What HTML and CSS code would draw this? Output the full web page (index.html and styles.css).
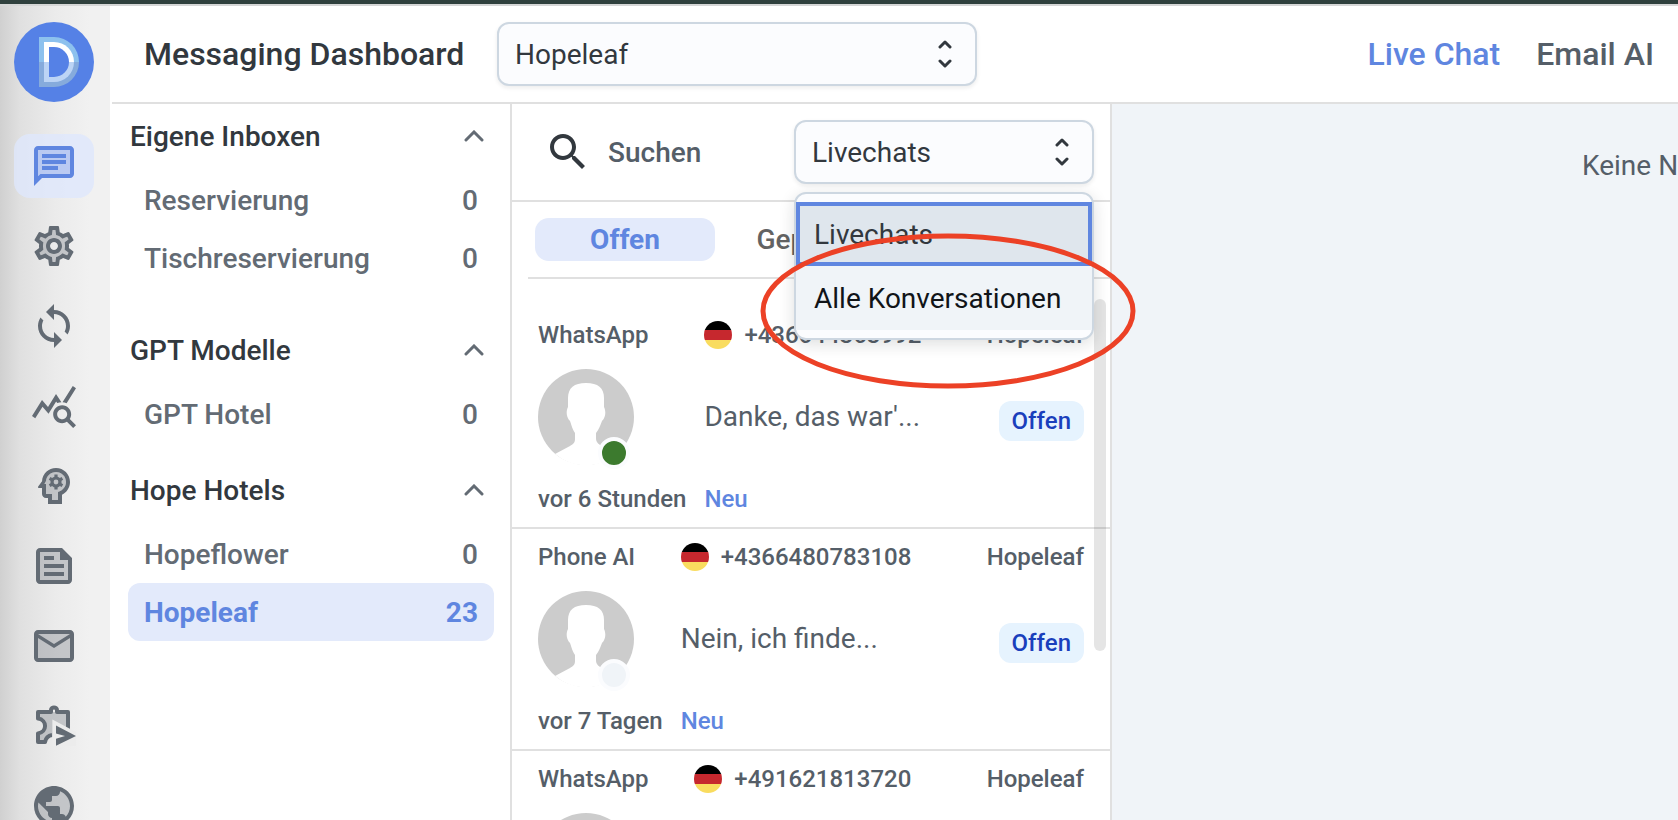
FILE: index.html
```html
<!DOCTYPE html>
<html lang="de">
<head>
    <meta charset="UTF-8">
    <meta name="viewport" content="width=device-width, initial-scale=1.0">
    <title>Messaging Dashboard</title>
    <link rel="stylesheet" href="styles.css">
</head>
<body>
    <!-- shared shapes -->
    <svg class="defs" aria-hidden="true">
        <symbol id="avatar" viewBox="0 0 96 96">
            <circle cx="48" cy="48" r="48" fill="#cccccc"/>
            <path fill="#fff" d="M48 14C36 14 30 19 30 29v9c-2 4-2 10 2 14 2 6 3 9 5 12v6c0 4-2 5-5 7l-15 8a48 48 0 0 0 62 0l-15-8c-4-2-6-4-6-8v-5c3-4 4-7 6-12 4-4 4-10 2-14v-9c0-10-6-15-18-15z"/>
        </symbol>
        <symbol id="updown" viewBox="0 0 14 28">
            <path d="M2 7l5-5 5 5M2 21l5 5 5-5" fill="none" stroke="currentColor" stroke-width="3" stroke-linecap="round" stroke-linejoin="round"/>
        </symbol>
        <symbol id="chevron" viewBox="0 0 20 12">
            <path d="M2 10l8-8 8 8" fill="none" stroke="currentColor" stroke-width="3" stroke-linecap="round"/>
        </symbol>
    </svg>

    <div class="app">
        <aside class="sidebar">
            <a class="logo" href="#" aria-label="Start"><span class="logo-mark"></span></a>
            <nav class="side-nav">
                <a class="side-link active" href="#" aria-label="Chat">
                    <svg viewBox="0 0 24 24"><path opacity=".3" d="M4 17.17L5.17 16H20V4H4z"/><path d="M20 2H4c-1.1 0-1.99.9-1.99 2L2 22l4-4h14c1.1 0 2-.9 2-2V4c0-1.1-.9-2-2-2zm0 14H5.17L4 17.17V4h16v12zM6 12h8v2H6zm0-3h12v2H6zm0-3h12v2H6z"/></svg>
                </a>
                <a class="side-link" href="#" aria-label="Einstellungen">
                    <svg viewBox="0 0 24 24"><path opacity=".3" fill-rule="evenodd" d="M17.45 11.27c.04.31.05.52.05.73 0 .21-.02.43-.05.73l-.14 1.13.89.7 1.08.84-.7 1.21-1.27-.51-1.04-.42-.9.68c-.43.32-.84.56-1.25.73l-1.06.43-.16 1.13-.2 1.35h-1.4l-.19-1.35-.16-1.13-1.06-.43c-.43-.18-.83-.41-1.23-.71l-.91-.7-1.06.43-1.27.51-.7-1.21 1.08-.84.89-.7-.14-1.13c-.03-.31-.05-.54-.05-.74s.02-.43.05-.73l.14-1.13-.89-.7-1.08-.84.7-1.21 1.27.51 1.04.42.9-.68c.43-.32.84-.56 1.25-.73l1.06-.43.16-1.13.2-1.35h1.39l.19 1.35.16 1.13 1.06.43c.43.18.83.41 1.23.71l.91.7 1.06-.43 1.27-.51.7 1.21-1.07.85-.89.7zM12 10a2 2 0 1 0 0 4 2 2 0 0 0 0-4z"/><path d="M19.43 12.98c.04-.32.07-.64.07-.98 0-.34-.03-.66-.07-.98l2.11-1.65c.19-.15.24-.42.12-.64l-2-3.46c-.09-.16-.26-.25-.44-.25-.06 0-.12.01-.17.03l-2.49 1c-.52-.4-1.08-.73-1.69-.98l-.38-2.65C14.46 2.18 14.25 2 14 2h-4c-.25 0-.46.18-.49.42l-.38 2.65c-.61.25-1.17.59-1.69.98l-2.49-1c-.06-.02-.12-.03-.18-.03-.17 0-.34.09-.43.25l-2 3.46c-.13.22-.07.49.12.64l2.11 1.65c-.04.32-.07.65-.07.98 0 .33.03.66.07.98l-2.11 1.65c-.19.15-.24.42-.12.64l2 3.46c.09.16.26.25.44.25.06 0 .12-.01.17-.03l2.49-1c.52.4 1.08.73 1.69.98l.38 2.65c.03.24.24.42.49.42h4c.25 0 .46-.18.49-.42l.38-2.65c.61-.25 1.17-.59 1.69-.98l2.49 1c.06.02.12.03.18.03.17 0 .34-.09.43-.25l2-3.46c.12-.22.07-.49-.12-.64l-2.11-1.65zm-1.98-1.71c.04.31.05.52.05.73 0 .21-.02.43-.05.73l-.14 1.13.89.7 1.08.84-.7 1.21-1.27-.51-1.04-.42-.9.68c-.43.32-.84.56-1.25.73l-1.06.43-.16 1.13-.2 1.35h-1.4l-.19-1.35-.16-1.13-1.06-.43c-.43-.18-.83-.41-1.23-.71l-.91-.7-1.06.43-1.27.51-.7-1.21 1.08-.84.89-.7-.14-1.13c-.03-.31-.05-.54-.05-.74s.02-.43.05-.73l.14-1.13-.89-.7-1.08-.84.7-1.21 1.27.51 1.04.42.9-.68c.43-.32.84-.56 1.25-.73l1.06-.43.16-1.13.2-1.35h1.39l.19 1.35.16 1.13 1.06.43c.43.18.83.41 1.23.71l.91.7 1.06-.43 1.27-.51.7 1.21-1.07.85-.89.7.14 1.13zM12 8c-2.21 0-4 1.79-4 4s1.79 4 4 4 4-1.79 4-4-1.79-4-4-4zm0 6c-1.1 0-2-.9-2-2s.9-2 2-2 2 .9 2 2-.9 2-2 2z"/></svg>
                </a>
                <a class="side-link" href="#" aria-label="Synchronisieren">
                    <svg viewBox="0 0 24 24"><path d="M12 4V1L8 5l4 4V6c3.31 0 6 2.69 6 6 0 1.01-.25 1.97-.7 2.8l1.46 1.46C19.54 15.03 20 13.57 20 12c0-4.42-3.58-8-8-8zm0 14c-3.31 0-6-2.69-6-6 0-1.01.25-1.97.7-2.8L5.24 7.74C4.46 8.97 4 10.43 4 12c0 4.42 3.58 8 8 8v3l4-4-4-4v3z"/></svg>
                </a>
                <a class="side-link" href="#" aria-label="Statistik">
                    <svg viewBox="0 0 24 24"><path d="M19.88 18.47c.44-.7.7-1.51.7-2.39 0-2.49-2.01-4.5-4.5-4.5s-4.5 2.01-4.5 4.5 2.01 4.5 4.49 4.5c.88 0 1.7-.26 2.39-.7L21.58 23 23 21.58l-3.12-3.11zm-3.8.11c-1.38 0-2.5-1.12-2.5-2.5s1.12-2.5 2.5-2.5 2.5 1.12 2.5 2.5-1.12 2.5-2.5 2.5zm-.36-8.5c-.74.02-1.45.18-2.1.45l-.55-.83-3.8 6.18-3.01-3.52-3.63 5.81L1 17l5-8 3 3.5L13 6l2.72 4.08zm2.59.5c-.64-.28-1.33-.45-2.05-.49L21.38 2 23 3.18l-4.69 7.4z"/></svg>
                </a>
                <a class="side-link" href="#" aria-label="KI">
                    <svg viewBox="0 0 24 24"><path opacity=".3" d="M14 15v4h-3v-3H8v-5H7.2L8 9.5C8.2 7 10.3 5 13 5c2.8 0 5 2.2 5 5 0 2.3-1.5 4.2-4 5z"/><path fill-rule="evenodd" d="M13 3C9.25 3 6.2 5.94 6.02 9.64L4.1 12.2c-.25.33-.01.8.4.8H6v3c0 1.1.9 2 2 2h1v3h7v-4.68c2.36-1.12 4-3.53 4-6.32 0-3.87-3.13-7-7-7zm1 12v4h-3v-3H8v-5H7.2L8 9.5C8.2 7 10.3 5 13 5c2.8 0 5 2.2 5 5 0 2.3-1.5 4.2-4 5z"/><circle cx="13" cy="10" r="2" fill="none" stroke="currentColor" stroke-width="1.6"/><path fill="none" stroke="currentColor" stroke-width="1.6" d="M13 6.3v1.5M13 12.2v1.5M9.8 8.15l1.3.75M14.9 11.1l1.3.75M9.8 11.85l1.3-.75M14.9 8.9l1.3-.75"/></svg>
                </a>
                <a class="side-link" href="#" aria-label="Artikel">
                    <svg viewBox="0 0 24 24"><path opacity=".3" d="M5 5h10v4h4v10H5z"/><path d="M16 3H5c-1.1 0-2 .9-2 2v14c0 1.1.9 2 2 2h14c1.1 0 2-.9 2-2V8l-5-5zm3 16H5V5h10v4h4v10zM7 17h10v-2H7v2zm5-10H7v2h5V7zm-5 6h10v-2H7v2z"/></svg>
                </a>
                <a class="side-link" href="#" aria-label="E-Mail">
                    <svg viewBox="0 0 24 24"><path opacity=".3" d="M4 6h16v12H4z"/><path d="M22 6c0-1.1-.9-2-2-2H4c-1.1 0-2 .9-2 2v12c0 1.1.9 2 2 2h16c1.1 0 2-.9 2-2V6zm-2 0l-8 4.99L4 6h16zm0 12H4V8l8 5 8-5v10z"/></svg>
                </a>
                <a class="side-link" href="#" aria-label="Integrationen">
                    <svg viewBox="0 0 24 24"><path opacity=".3" d="M4 5h15v8l-8 4-4 3H4v-4.5a3.5 3.5 0 0 0 0-7z"/><path fill="none" stroke="currentColor" stroke-width="2" stroke-linejoin="round" d="M19 14V5h-5.5V4c0-1.7-3-1.7-3 0v1H4v3.3c4.7.6 4.7 6.8 0 7.4V20h3.5c.4-2 1.7-3.2 3.5-3.5"/><path fill="#ececec" d="M11.2 8.8L23 15v7H11.2z"/><path d="M13 11.8l10 5.2-10 4.9v-3.5l4.5-1.4-4.5-1.3z"/></svg>
                </a>
                <a class="side-link" href="#" aria-label="Webseite">
                    <svg viewBox="0 0 24 24"><circle opacity=".3" cx="12" cy="12" r="9"/><path d="M12 2C6.48 2 2 6.48 2 12s4.48 10 10 10 10-4.48 10-10S17.52 2 12 2zM4 12c0-.61.08-1.21.21-1.78L8.99 15v1c0 1.1.9 2 2 2v1.93C7.06 19.43 4 16.07 4 12zm13.89 5.4c-.26-.81-1-1.4-1.9-1.4h-1v-3c0-.55-.45-1-1-1h-6v-2h2c.55 0 1-.45 1-1V7h2c1.1 0 2-.9 2-2v-.41C17.92 5.77 20 8.65 20 12c0 2.08-.81 3.98-2.11 5.4z"/></svg>
                </a>
            </nav>
        </aside>

        <div class="main">
            <header class="header">
                <h1>Messaging Dashboard</h1>
                <div class="select-box hotel-select">
                    <select aria-label="Hotel"><option>Hopeleaf</option></select>
                    <svg><use href="#updown"/></svg>
                </div>
                <nav class="top-nav">
                    <a class="active" href="#">Live Chat</a>
                    <a href="#">Email AI</a>
                </nav>
            </header>

            <div class="content">
                <section class="inboxes">
                    <div class="group spaced">
                        <button class="group-title">Eigene Inboxen <svg><use href="#chevron"/></svg></button>
                        <a class="inbox" href="#"><span>Reservierung</span><span>0</span></a>
                        <a class="inbox" href="#"><span>Tischreservierung</span><span>0</span></a>
                    </div>
                    <div class="group">
                        <button class="group-title">GPT Modelle <svg><use href="#chevron"/></svg></button>
                        <a class="inbox" href="#"><span>GPT Hotel</span><span>0</span></a>
                    </div>
                    <div class="group">
                        <button class="group-title">Hope Hotels <svg><use href="#chevron"/></svg></button>
                        <a class="inbox" href="#"><span>Hopeflower</span><span>0</span></a>
                        <a class="inbox active" href="#"><span>Hopeleaf</span><span>23</span></a>
                    </div>
                </section>

                <section class="chats">
                    <div class="search-row">
                        <svg class="search-icon" viewBox="0 0 24 24"><path d="M15.5 14h-.79l-.28-.27C15.41 12.59 16 11.11 16 9.5 16 5.91 13.09 3 9.5 3S3 5.91 3 9.5 5.91 16 9.5 16c1.61 0 3.09-.59 4.23-1.57l.27.28v.79l5 4.99L20.49 19l-4.99-5zm-6 0C7.01 14 5 11.99 5 9.5S7.01 5 9.5 5 14 7.01 14 9.5 11.99 14 9.5 14z"/></svg>
                        <input class="search" type="text" placeholder="Suchen" aria-label="Suchen">
                        <div class="filter">
                            <div class="select-box">
                                <select aria-label="Filter"><option>Livechats</option><option>Alle Konversationen</option></select>
                                <svg><use href="#updown"/></svg>
                            </div>
                            <div class="menu">
                                <button class="option selected">Livechats</button>
                                <button class="option hover">Alle Konversationen</button>
                            </div>
                            <svg class="marker" viewBox="0 0 376 156"><ellipse cx="188" cy="78" rx="185" ry="75" fill="none" stroke="#ec4126" stroke-width="5"/></svg>
                        </div>
                    </div>
                    <div class="tabs">
                        <button class="tab active">Offen</button>
                        <button class="tab">Geplant</button>
                    </div>
                    <div class="chat-list">
                        <article class="chat">
                            <span>WhatsApp</span>
                            <span class="phone"><i class="flag"></i>+436644363992</span>
                            <span class="hotel">Hopeleaf</span>
                            <div class="avatar"><svg><use href="#avatar"/></svg><i class="dot online"></i></div>
                            <p>Danke, das war'...</p>
                            <span class="badge">Offen</span>
                            <span>vor 6 Stunden</span>
                            <span class="new">Neu</span>
                        </article>
                        <article class="chat">
                            <span>Phone AI</span>
                            <span class="phone"><i class="flag"></i>+4366480783108</span>
                            <span class="hotel">Hopeleaf</span>
                            <div class="avatar"><svg><use href="#avatar"/></svg><i class="dot"></i></div>
                            <p>Nein, ich finde...</p>
                            <span class="badge">Offen</span>
                            <span>vor 7 Tagen</span>
                            <span class="new">Neu</span>
                        </article>
                        <article class="chat">
                            <span>WhatsApp</span>
                            <span class="phone"><i class="flag"></i>+491621813720</span>
                            <span class="hotel">Hopeleaf</span>
                            <div class="avatar"><svg><use href="#avatar"/></svg><i class="dot"></i></div>
                            <p></p>
                            <span class="badge">Offen</span>
                            <span>vor 13 Tagen</span>
                            <span class="new">Neu</span>
                        </article>
                        <div class="scrollbar"></div>
                    </div>
                </section>

                <main class="messages">
                    <p>Keine Nachrichten</p>
                </main>
            </div>
        </div>
    </div>
</body>
</html>
```
FILE: styles.css
```css
* {
    box-sizing: border-box;
}
body {
    margin: 0;
    height: 100vh;
    overflow: hidden;
    font-family: Roboto, "Noto Sans", sans-serif;
    font-size: 28px;
    color: #32383e;
    background: #fff;
    border-top: 4px solid #2f403d;
}
button, select, input {
    font: inherit;
    color: inherit;
    border: none;
    background: none;
    padding: 0;
}
a {
    color: inherit;
    text-decoration: none;
}
h1, p {
    margin: 0;
}
.defs {
    position: absolute;
    width: 0;
    height: 0;
}
.app {
    display: flex;
    height: 100%;
    border-top: 2px solid #d5d6d6;
}

/* icon bar */
.sidebar {
    flex: none;
    width: 110px;
    padding: 16px 16px 16px 14px;
    background: linear-gradient(90deg, #d0d0d0, #e0e0e0 20px, #ebebeb 55px, #f1f1f1 90px);
    overflow: hidden;
}
.logo {
    display: flex;
    align-items: center;
    justify-content: center;
    width: 80px;
    height: 80px;
    padding-left: 10px;
    border-radius: 50%;
    background: #5581e6;
}
.logo-mark {
    display: grid;
    width: 40px;
    height: 50px;
    border-radius: 0 25px 25px 0;
    background: linear-gradient(#8dc1ee 50%, #86abdc 50%);
}
.logo-mark::before, .logo-mark::after {
    content: "";
    grid-area: 1 / 1;
    margin: 5px;
    border-radius: 0 20px 20px 0;
    background: linear-gradient(#fff 50%, #bcd4f5 50%);
}
.logo-mark::after {
    margin: 10px;
    border-radius: 0 15px 15px 0;
    background: #5581e6;
}
.side-nav {
    display: flex;
    flex-direction: column;
    gap: 16px;
    margin-top: 32px;
}
.side-link {
    display: flex;
    align-items: center;
    justify-content: center;
    height: 64px;
    border-radius: 16px;
    color: #636b74;
}
.side-link.active {
    color: #5f86e0;
    background: rgba(222, 231, 252, 0.8);
}
.side-link svg {
    width: 48px;
    height: 48px;
    fill: currentColor;
}

/* header */
.main {
    flex: 1;
    min-width: 0;
    display: flex;
    flex-direction: column;
    padding-left: 2px;
}
.header {
    display: flex;
    align-items: center;
    flex: none;
    height: 98px;
    padding: 0 24px 0 32px;
    border-bottom: 2px solid #e0e0e0;
}
h1 {
    width: 353px;
    font-size: 32px;
    font-weight: 500;
    white-space: nowrap;
}
.select-box {
    display: flex;
    align-items: center;
    height: 64px;
    padding: 0 23px 0 16px;
    border: 2px solid #cdd7e1;
    border-radius: 12px;
    background: #fbfcfe;
    box-shadow: 0 2px 4px rgba(20, 25, 30, 0.08);
}
.hotel-select {
    width: 480px;
}
.select-box select {
    flex: 1;
    min-width: 0;
    appearance: none;
    outline: none;
}
.select-box svg {
    flex: none;
    width: 14px;
    height: 28px;
}
.top-nav {
    display: flex;
    gap: 36px;
    margin-left: auto;
    font-size: 32px;
    font-weight: 500;
    color: #555e68;
}
.top-nav .active {
    color: #5f86e0;
}

.content {
    flex: 1;
    min-height: 0;
    display: flex;
}

/* inbox groups */
.inboxes {
    flex: none;
    width: 400px;
    padding: 0 16px;
    border-right: 2px solid #e0e0e0;
    font-weight: 500;
}
.group {
    margin-bottom: 15px;
}
.group.spaced {
    margin-bottom: 31px;
}
.group-title {
    display: flex;
    align-items: center;
    justify-content: space-between;
    width: 100%;
    height: 64px;
    margin-bottom: 3px;
    padding: 0 10px 0 2px;
    font-weight: 500;
}
.group-title svg {
    width: 20px;
    height: 12px;
    color: #636b74;
}
.inbox {
    display: flex;
    align-items: center;
    justify-content: space-between;
    height: 58px;
    padding: 0 16px;
    border-radius: 12px;
    color: #636b74;
}
.inbox.active {
    color: #5f86e0;
    background: #e3eafb;
    font-weight: 700;
}

/* conversations */
.chats {
    flex: none;
    display: flex;
    flex-direction: column;
    width: 600px;
    border-right: 2px solid #e0e0e0;
}
.search-row {
    display: flex;
    align-items: center;
    flex: none;
    height: 98px;
    padding: 0 16px 0 32px;
    border-bottom: 2px solid #e0e0e0;
}
.search-icon {
    flex: none;
    width: 48px;
    height: 48px;
    fill: #32383e;
}
.search {
    flex: 1;
    min-width: 0;
    margin-left: 16px;
    font-weight: 500;
    outline: none;
}
.search::placeholder {
    color: #555e68;
    opacity: 1;
}
.filter {
    position: relative;
    flex: none;
    width: 300px;
}
.menu {
    position: absolute;
    z-index: 2;
    top: 72px;
    left: 0;
    width: 100%;
    padding: 8px 0;
    border: 2px solid #cdd7e1;
    border-radius: 12px;
    background: #fbfcfe;
    box-shadow: 0 4px 16px rgba(20, 25, 30, 0.14);
}
.option {
    display: block;
    width: 100%;
    height: 64px;
    padding: 0 18px;
    text-align: left;
}
.option.selected {
    padding: 0 14px;
    border: 4px solid #5f86e0;
    background: #dfe6ed;
}
.option.hover {
    color: #111418;
    background: #f0f4f8;
}
.marker {
    position: absolute;
    z-index: 3;
    top: 113px;
    left: -34px;
    width: 376px;
    height: 156px;
    pointer-events: none;
}
.tabs {
    display: flex;
    align-items: center;
    flex: none;
    height: 77px;
    margin-left: 16px;
    padding: 0 7px;
    border-bottom: 2px solid #e0e0e0;
}
.tab {
    width: 180px;
    height: 43px;
    border-radius: 14px;
    font-weight: 500;
    color: #636363;
}
.tab.active {
    font-weight: 700;
    color: #5f86e0;
    background: #e3eafb;
}
.chat-list {
    position: relative;
    flex: 1;
    min-height: 0;
    padding-top: 28px;
    overflow: hidden;
}
.chat {
    display: grid;
    grid-template-columns: auto auto 1fr;
    grid-template-rows: 36px 96px 36px;
    gap: 16px 18px;
    align-items: center;
    padding: 10px 26px;
    border-bottom: 2px solid #e0e0e0;
    font-size: 24px;
    font-weight: 500;
    line-height: 36px;
    color: #555e68;
}
.phone {
    display: flex;
    align-items: center;
    gap: 12px;
}
.flag {
    width: 28px;
    height: 28px;
    border-radius: 50%;
    background: linear-gradient(#000 33%, #c6282e 33%, #c6282e 67%, #f9dc5f 67%);
}
.hotel, .badge {
    justify-self: end;
}
.avatar {
    position: relative;
    width: 96px;
    height: 96px;
}
.avatar svg {
    display: block;
    width: 96px;
    height: 96px;
}
.dot {
    position: absolute;
    right: 4px;
    bottom: -4px;
    width: 32px;
    height: 32px;
    border: 4px solid #fbfcfe;
    border-radius: 50%;
    background: #f0f4f8;
}
.dot.online {
    background: #3c7a2e;
}
.chat p {
    font-size: 28px;
    font-weight: 400;
    white-space: nowrap;
}
.badge {
    margin-top: 8px;
    padding: 0 13px;
    border-radius: 12px;
    line-height: 40px;
    color: #1a3fbc;
    background: #e6f3fe;
}
.new {
    color: #5f86e0;
}
.scrollbar {
    position: absolute;
    top: 20px;
    right: 4px;
    width: 12px;
    height: 352px;
    border-radius: 6px;
    background: rgba(0, 0, 0, 0.1);
}

/* message pane */
.messages {
    flex: 1;
    min-width: 0;
    padding: 45px 0 0 470px;
    overflow: hidden;
    background: #f0f4f8;
    color: #555e68;
    white-space: nowrap;
}
```
